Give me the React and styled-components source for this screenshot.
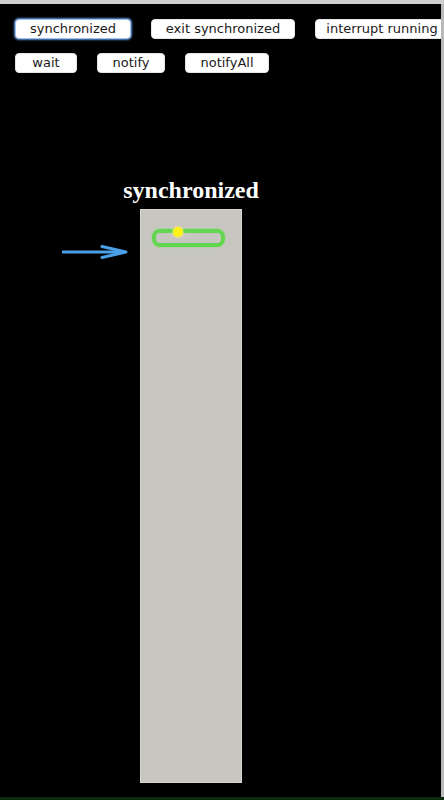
import styled, { createGlobalStyle } from "styled-components";

const GlobalStyle = createGlobalStyle`
  html, body {
    margin: 0;
    padding: 0;
    background: #000;
  }
  body {
    font-family: "DejaVu Sans", "Liberation Sans", sans-serif;
  }
`;

const Page = styled.div`
  width: 444px;
  height: 800px;
  display: flex;
  flex-direction: column;
  background: #000;
  overflow: hidden;
`;

const TopBar = styled.div`
  height: 4px;
  flex: none;
  background: #cfcfcf;
`;

const Main = styled.div`
  flex: 1;
  display: flex;
  flex-direction: column;
  border-right: 3px solid #b9b9b9;
  overflow: hidden;
`;

const BottomBar = styled.div`
  height: 3px;
  flex: none;
  background: #0e2a10;
`;

const Toolbar = styled.div`
  display: flex;
  flex-direction: column;
  gap: 14px;
  padding: 15px 0 0 15px;
`;

const ButtonRow = styled.div`
  display: flex;
  gap: 20px;
  white-space: nowrap;
`;

const Button = styled.button`
  flex: none;
  width: ${(p) => p.$w}px;
  height: 20px;
  padding: 0;
  border: 1px solid ${(p) => (p.$focused ? "#9cc1ea" : "#e6e6e6")};
  border-radius: 4px;
  background: #fff;
  color: #1a1a1a;
  font-family: "DejaVu Sans", "Liberation Sans", sans-serif;
  font-size: 13px;
  line-height: 18px;
  text-align: center;
  box-shadow: ${(p) => (p.$focused ? "0 0 2px 1px #5b8fd6" : "none")};
`;

const Stage = styled.div`
  display: flex;
  align-items: flex-start;
  padding: 103px 0 0 62px;
  gap: 12px;
`;

const ArrowIcon = styled.svg`
  flex: none;
  margin-top: 69px;
  display: block;
`;

const Lane = styled.div`
  width: 102px;
  display: flex;
  flex-direction: column;
  align-items: center;
  gap: 5px;
`;

const Title = styled.div`
  white-space: nowrap;
  color: #fff;
  font-family: "Liberation Serif", "Times New Roman", serif;
  font-weight: bold;
  font-size: 24px;
  line-height: 28px;
`;

const Column = styled.div`
  width: 102px;
  height: 574px;
  box-sizing: border-box;
  background: #c8c6c0;
  border: 1px solid #d8d6d1;
  padding: 19px 0 0 11px;
`;

const Capsule = styled.div`
  position: relative;
  width: 73px;
  height: 18px;
  box-sizing: border-box;
  border: 4px solid #63d64f;
  border-radius: 8px;
  box-shadow: 0 0 2px #7be36a;
`;

const Dot = styled.div`
  position: absolute;
  left: 17px;
  top: -6px;
  width: 10px;
  height: 10px;
  border-radius: 50%;
  background: #fff21a;
  box-shadow: 0 0 3px #fffa80;
`;

export default function App() {
  return (
    <>
      <GlobalStyle />
      <Page>
        <TopBar />
        <Main>
          <Toolbar>
            <ButtonRow>
              <Button $w={116} $focused>synchronized</Button>
              <Button $w={144}>exit synchronized</Button>
              <Button $w={134}>interrupt running</Button>
            </ButtonRow>
            <ButtonRow>
              <Button $w={62}>wait</Button>
              <Button $w={68}>notify</Button>
              <Button $w={84}>notifyAll</Button>
            </ButtonRow>
          </Toolbar>
          <Stage>
            <ArrowIcon width="66" height="14" viewBox="0 0 66 14">
              <line x1="1" y1="7" x2="62" y2="7" stroke="#4aa0e6" strokeWidth="3" strokeLinecap="round" />
              <polyline
                points="40,1.5 64,7 40,12.5"
                fill="none"
                stroke="#4aa0e6"
                strokeWidth="3"
                strokeLinecap="round"
                strokeLinejoin="round"
              />
            </ArrowIcon>
            <Lane>
              <Title>synchronized</Title>
              <Column>
                <Capsule>
                  <Dot />
                </Capsule>
              </Column>
            </Lane>
          </Stage>
        </Main>
        <BottomBar />
      </Page>
    </>
  );
}
